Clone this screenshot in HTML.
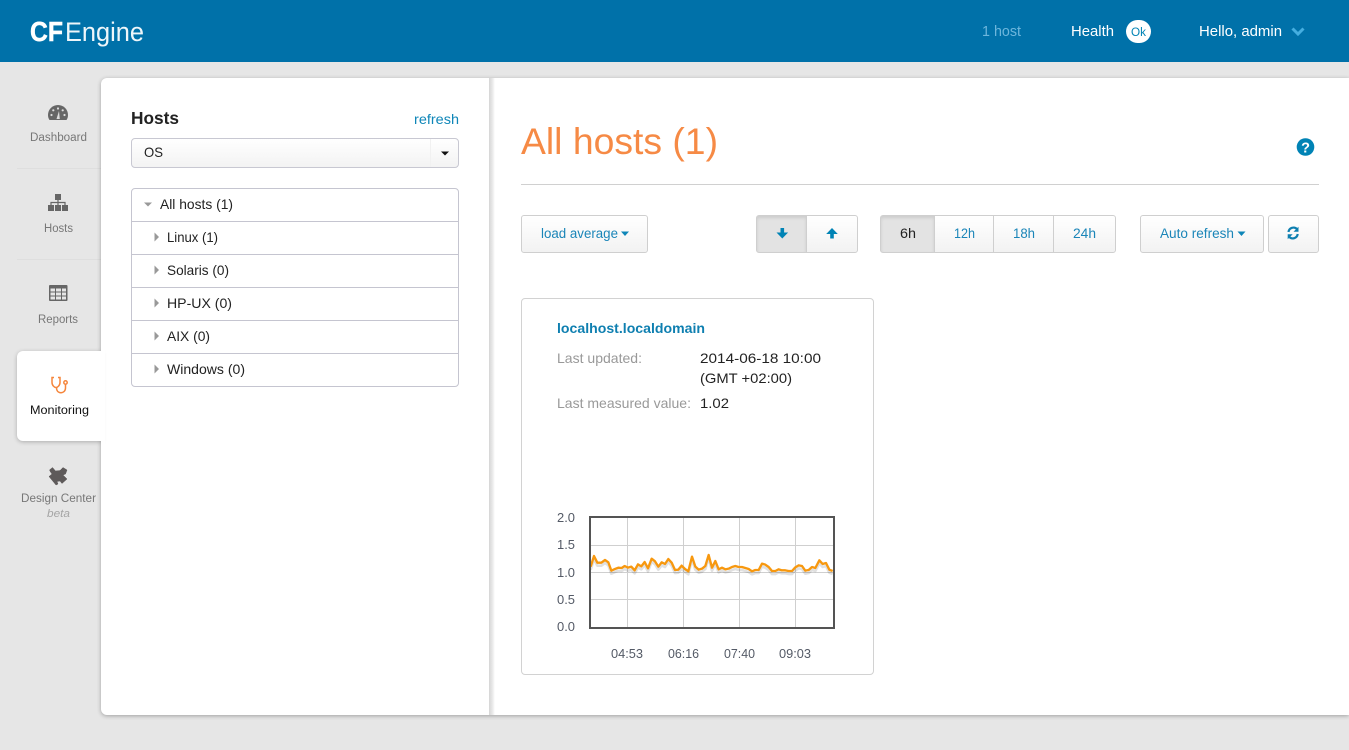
<!DOCTYPE html>
<html lang="en"><head><meta charset="utf-8"><title>CFEngine</title>
<style>
html,body{margin:0;padding:0;width:1349px;height:750px;overflow:hidden;background:#e6e6e6;font-family:"Liberation Sans",sans-serif}
.b{position:absolute;box-sizing:border-box}
.btn{border:1px solid #cfcfcf;background:linear-gradient(#fff,#f2f2f2);top:215px;height:38px;border-radius:3px}
.act{background:#e3e3e3;box-shadow:inset 0 2px 3px rgba(0,0,0,.1)}
svg{position:absolute;left:0;top:0}
text{font-family:"Liberation Sans",sans-serif}
</style></head><body>
<div class="b" style="left:0;top:0;width:1349px;height:62px;background:#0071a9"></div>
<div class="b" style="left:17px;top:168px;width:84px;height:1px;background:#dedede"></div>
<div class="b" style="left:17px;top:259px;width:84px;height:1px;background:#dedede"></div>
<div class="b" style="left:101px;top:78px;width:1248px;height:637px;background:#fff;border-radius:6px 0 0 6px;box-shadow:0 1px 4px rgba(0,0,0,.3)"></div>
<div class="b" style="left:489px;top:78px;width:6px;height:637px;background:linear-gradient(90deg,#d6d6d6,#e6e6e6 50%,#fff)"></div>
<div class="b" style="left:17px;top:351px;width:85px;height:90px;background:#fff;border-radius:6px 0 0 6px;box-shadow:0 1px 4px rgba(0,0,0,.25)"></div>
<div class="b" style="left:101px;top:345px;width:4px;height:102px;background:#fff"></div>

<div class="b" style="left:131px;top:138px;width:328px;height:30px;border:1px solid #c8c8d2;border-radius:4px;background:linear-gradient(#fff,#f3f3f3)"></div>
<div class="b" style="left:430px;top:139px;width:1px;height:28px;background:#f1f1f1"></div>
<div class="b" style="left:131px;top:188px;width:328px;height:199px;border:1px solid #c5c5d0;border-radius:4px"></div>
<div class="b" style="left:132px;top:221px;width:326px;height:1px;background:#c5c5d0"></div>
<div class="b" style="left:132px;top:254px;width:326px;height:1px;background:#c5c5d0"></div>
<div class="b" style="left:132px;top:287px;width:326px;height:1px;background:#c5c5d0"></div>
<div class="b" style="left:132px;top:320px;width:326px;height:1px;background:#c5c5d0"></div>
<div class="b" style="left:132px;top:353px;width:326px;height:1px;background:#c5c5d0"></div>

<div class="b" style="left:521px;top:184px;width:798px;height:1px;background:#d0d0d0"></div>

<div class="b btn" style="left:521px;width:127px"></div>
<div class="b btn act" style="left:756px;width:51px;border-radius:3px 0 0 3px"></div>
<div class="b btn" style="left:806px;width:52px;border-radius:0 3px 3px 0"></div>
<div class="b btn act" style="left:880px;width:55px;border-radius:3px 0 0 3px"></div>
<div class="b btn" style="left:934px;width:60px;border-radius:0"></div>
<div class="b btn" style="left:993px;width:61px;border-radius:0"></div>
<div class="b btn" style="left:1053px;width:63px;border-radius:0 3px 3px 0"></div>
<div class="b btn" style="left:1140px;width:124px"></div>
<div class="b btn" style="left:1268px;width:51px"></div>

<div class="b" style="left:521px;top:298px;width:353px;height:377px;border:1px solid #d2d2d2;border-radius:4px"></div>

<svg width="1349" height="750" viewBox="0 0 1349 750">
<!-- logo -->
<text x="30" y="41" font-size="27.500" font-weight="700" fill="#fff" stroke="#fff" stroke-width=".5" textLength="33" lengthAdjust="spacingAndGlyphs">CF</text>
<text x="65" y="41" font-size="27" fill="#eef6fa" textLength="79" lengthAdjust="spacingAndGlyphs">Engine</text>
<!-- header -->
<text x="982" y="36" font-size="14.500" fill="#6db6dc" textLength="39" lengthAdjust="spacingAndGlyphs">1 host</text>
<text x="1071" y="36" font-size="14.500" fill="#fff" textLength="43" lengthAdjust="spacingAndGlyphs">Health</text>
<rect x="1126" y="20" width="25" height="23" rx="11.500" fill="#fff"/>
<text x="1131" y="36" font-size="11.500" fill="#0083b5" textLength="15" lengthAdjust="spacingAndGlyphs">Ok</text>
<text x="1199" y="36" font-size="14.500" fill="#fff" textLength="83" lengthAdjust="spacingAndGlyphs">Hello, admin</text>
<path d="M1292.500 28.500l5.500 5.500 5.500-5.500" fill="none" stroke="#45aee0" stroke-width="3"/>

<!-- sidebar icons -->
<path d="M48 115a10 10 0 0 1 20 0c0 2-.5 3.500-1.500 5H49.500c-1-1.500-1.500-3-1.500-5z" fill="#666"/>
<g fill="#ddd"><circle cx="51.500" cy="115" r="1.100"/><circle cx="53.300" cy="110.300" r="1.100"/><circle cx="58" cy="108.500" r="1.100"/><circle cx="62.700" cy="110.300" r="1.100"/><circle cx="64.500" cy="115" r="1.100"/></g>
<path d="M56.500 119l2.500-8 .8 8z" fill="#ddd"/>

<g fill="#666"><rect x="55" y="194" width="6" height="6"/><rect x="48" y="205" width="6" height="6"/><rect x="55" y="205" width="6" height="6"/><rect x="62" y="205" width="6" height="6"/></g>
<path d="M58 200v5M51 205v-2.500h14v2.500" fill="none" stroke="#666" stroke-width="1.200"/>

<rect x="49" y="285" width="18.500" height="16" rx="1" fill="#666"/>
<g fill="#e6e6e6"><rect x="50.500" y="288.500" width="4.500" height="3"/><rect x="56" y="288.500" width="5" height="3"/><rect x="62" y="288.500" width="4" height="3"/><rect x="50.500" y="292.500" width="4.500" height="3"/><rect x="56" y="292.500" width="5" height="3"/><rect x="62" y="292.500" width="4" height="3"/><rect x="50.500" y="296.500" width="4.500" height="3"/><rect x="56" y="296.500" width="5" height="3"/><rect x="62" y="296.500" width="4" height="3"/></g>

<g fill="none" stroke="#f5863c" stroke-width="1.500">
<path d="M54 377.500h-2v5c0 3 2.500 5 4 5s4-2 4-5v-5h-2"/>
<path d="M56.500 387.500c0 3.500 1.800 5.200 4.300 5.200 2.800 0 4.700-2 4.700-4.700v-3.500"/>
<circle cx="65.500" cy="382.500" r="1.700"/>
</g>

<polygon points="49.500,470 52.500,467.500 55.500,471 60,470.500 63,467.500 67,470 65.500,474 63,475 67,479 62,483.500 60,481 57,481.500 58,484 56,485 49,476.500 52,474 50.500,472" fill="#5e5a5a" stroke="#5e5a5a" stroke-width=".5" stroke-linejoin="round"/>

<!-- sidebar labels -->
<text x="30" y="141" font-size="11.500" fill="#777" textLength="57" lengthAdjust="spacingAndGlyphs">Dashboard</text>
<text x="44" y="232" font-size="11.500" fill="#777" textLength="29" lengthAdjust="spacingAndGlyphs">Hosts</text>
<text x="38" y="323" font-size="11.500" fill="#777" textLength="40" lengthAdjust="spacingAndGlyphs">Reports</text>
<text x="30" y="414" font-size="11.500" fill="#111" textLength="59" lengthAdjust="spacingAndGlyphs">Monitoring</text>
<text x="21" y="502" font-size="11.500" fill="#777" textLength="75" lengthAdjust="spacingAndGlyphs">Design Center</text>
<text x="47" y="517" font-size="11" font-style="italic" fill="#a5a5a5" textLength="23" lengthAdjust="spacingAndGlyphs">beta</text>

<!-- hosts panel -->
<text x="131" y="124" font-size="17.500" font-weight="700" fill="#222" textLength="48" lengthAdjust="spacingAndGlyphs">Hosts</text>
<text x="414" y="124" font-size="14" fill="#0e86b8" textLength="45" lengthAdjust="spacingAndGlyphs">refresh</text>
<text x="144" y="157" font-size="14" fill="#222" textLength="19" lengthAdjust="spacingAndGlyphs">OS</text>
<path d="M441 151.500h8l-4 4z" fill="#111"/>
<path d="M144 202.500h8l-4 4z" fill="#999"/>
<text x="160" y="209" font-size="14" fill="#222" textLength="73" lengthAdjust="spacingAndGlyphs">All hosts (1)</text>
<g fill="#999"><path d="M154.500 232.500l4.500 4.500-4.500 4.500z"/><path d="M154.500 265.500l4.500 4.500-4.500 4.500z"/><path d="M154.500 298.500l4.500 4.500-4.500 4.500z"/><path d="M154.500 331.500l4.500 4.500-4.500 4.500z"/><path d="M154.500 364.500l4.500 4.500-4.500 4.500z"/></g>
<g font-size="14" fill="#222">
<text x="167" y="242" textLength="51" lengthAdjust="spacingAndGlyphs">Linux (1)</text>
<text x="167" y="275" textLength="62" lengthAdjust="spacingAndGlyphs">Solaris (0)</text>
<text x="167" y="308" textLength="65" lengthAdjust="spacingAndGlyphs">HP-UX (0)</text>
<text x="167" y="341" textLength="43" lengthAdjust="spacingAndGlyphs">AIX (0)</text>
<text x="167" y="374" textLength="78" lengthAdjust="spacingAndGlyphs">Windows (0)</text>
</g>

<!-- title -->
<text x="521" y="154" font-size="37.500" fill="#f68a45" textLength="197" lengthAdjust="spacingAndGlyphs">All hosts (1)</text>
<circle cx="1305.500" cy="147" r="8.800" fill="#0083b5"/>
<text x="1305.500" y="152.500" font-size="14.500" font-weight="700" fill="#fff" text-anchor="middle">?</text>

<!-- toolbar -->
<g font-size="13.500" fill="#1a85b8">
<text x="541" y="238" textLength="77" lengthAdjust="spacingAndGlyphs">load average</text>
<text x="954" y="238" textLength="21" lengthAdjust="spacingAndGlyphs">12h</text>
<text x="1013" y="238" textLength="22" lengthAdjust="spacingAndGlyphs">18h</text>
<text x="1073" y="238" textLength="23" lengthAdjust="spacingAndGlyphs">24h</text>
<text x="1160" y="238" textLength="74" lengthAdjust="spacingAndGlyphs">Auto refresh</text>
</g>
<text x="900" y="238" font-size="13.500" fill="#222" textLength="16" lengthAdjust="spacingAndGlyphs">6h</text>
<path d="M621 231.500h8l-4 4.500zM1237.500 231.500h8l-4 4.500z" fill="#0e86b8"/>
<path d="M780.500 228h3.600v4.500h4l-5.800 6-5.800-6h4z" fill="#0083b5"/>
<path d="M830.200 238.500h3.600v-4.500h4l-5.800-6-5.800 6h4z" fill="#0083b5"/>
<g fill="none" stroke="#0e7fb0" stroke-width="2.200">
<path d="M1288.500 232a5 5 0 0 1 8.700-2.700"/><path d="M1297.700 234a5 5 0 0 1-8.700 2.700"/>
</g>
<path d="M1298.500 226.800v5h-5zM1287.700 239.200v-5h5z" fill="#0e7fb0"/>

<!-- card -->
<text x="557" y="333" font-size="14" font-weight="700" fill="#0e7fb0" textLength="148" lengthAdjust="spacingAndGlyphs">localhost.localdomain</text>
<text x="557" y="363" font-size="14" fill="#999" textLength="85" lengthAdjust="spacingAndGlyphs">Last updated:</text>
<text x="700" y="363" font-size="14" fill="#222" textLength="121" lengthAdjust="spacingAndGlyphs">2014-06-18 10:00</text>
<text x="700" y="383" font-size="14" fill="#222" textLength="92" lengthAdjust="spacingAndGlyphs">(GMT +02:00)</text>
<text x="557" y="408" font-size="14" fill="#999" textLength="134" lengthAdjust="spacingAndGlyphs">Last measured value:</text>
<text x="700" y="408" font-size="14" fill="#222" textLength="29" lengthAdjust="spacingAndGlyphs">1.02</text>

<!-- chart -->
<g stroke="#cfcfcf" stroke-width="1" fill="none">
<path d="M590 545.500H834M590 572.500H834M590 599.500H834M627.500 517V628M683.500 517V628M739.500 517V628M795.500 517V628"/>
</g>
<g transform="translate(540 500) scale(.33333)" fill="none" stroke-linejoin="round">
<polyline transform="translate(0 9)" stroke="#000" stroke-opacity=".12" stroke-width="8" points="152,200 162,168 172,188 184,188 195,180 205,187 214,212 225,207 235,203 245,204 254,198 264,203 274,200 284,211 294,193 304,199 314,186 324,205 335,176 345,184 355,200 365,187 375,192 385,177 395,188 405,210 415,209 425,197 435,207 445,214 456,170 466,200 476,209 486,206 496,198 506,165 516,203 526,183 536,208 546,203 556,208 566,206 576,201 586,198 596,201 606,201 616,204 626,207 636,214 646,210 656,210 666,191 676,194 686,201 696,213 706,213 716,208 726,211 736,211 746,213 756,213 766,202 776,196 786,198 796,212 806,210 816,201 826,204 838,181 848,192 858,189 868,209 878,213"/>
<polyline stroke="#f7980f" stroke-width="7" points="152,200 162,168 172,188 184,188 195,180 205,187 214,212 225,207 235,203 245,204 254,198 264,203 274,200 284,211 294,193 304,199 314,186 324,205 335,176 345,184 355,200 365,187 375,192 385,177 395,188 405,210 415,209 425,197 435,207 445,214 456,170 466,200 476,209 486,206 496,198 506,165 516,203 526,183 536,208 546,203 556,208 566,206 576,201 586,198 596,201 606,201 616,204 626,207 636,214 646,210 656,210 666,191 676,194 686,201 696,213 706,213 716,208 726,211 736,211 746,213 756,213 766,202 776,196 786,198 796,212 806,210 816,201 826,204 838,181 848,192 858,189 868,209 878,213"/>
</g>
<rect x="590" y="517" width="244" height="111" fill="none" stroke="#545454" stroke-width="2"/>
<g font-size="12.500" fill="#545a66">
<text x="557" y="522" textLength="18" lengthAdjust="spacingAndGlyphs">2.0</text>
<text x="557" y="549" textLength="18" lengthAdjust="spacingAndGlyphs">1.5</text>
<text x="557" y="577" textLength="18" lengthAdjust="spacingAndGlyphs">1.0</text>
<text x="557" y="604" textLength="18" lengthAdjust="spacingAndGlyphs">0.5</text>
<text x="557" y="631" textLength="18" lengthAdjust="spacingAndGlyphs">0.0</text>
<text x="611" y="658" textLength="32" lengthAdjust="spacingAndGlyphs">04:53</text>
<text x="668" y="658" textLength="31" lengthAdjust="spacingAndGlyphs">06:16</text>
<text x="724" y="658" textLength="31" lengthAdjust="spacingAndGlyphs">07:40</text>
<text x="779" y="658" textLength="32" lengthAdjust="spacingAndGlyphs">09:03</text>
</g>
</svg>
</body></html>
